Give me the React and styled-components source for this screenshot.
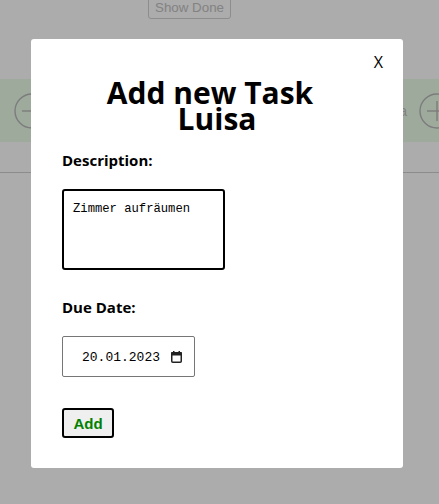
import React from 'react'
import styled, { createGlobalStyle } from 'styled-components'

const GlobalStyle = createGlobalStyle`
	html, body {
		margin: 0;
		padding: 0;
		background: #fff;
		font-family: 'Open Sans', 'Noto Sans', sans-serif;
	}
`

const CircleIcon = ({ plus }) => (
	<svg width='36' height='36' viewBox='0 0 36 36'>
		<circle cx='18' cy='18' r='17' fill='none' stroke='#b8b8b8' strokeWidth='1.4' />
		<line x1='8' y1='18' x2='28' y2='18' stroke='#b8b8b8' strokeWidth='1.4' />
		{plus && <line x1='18' y1='8' x2='18' y2='28' stroke='#b8b8b8' strokeWidth='1.4' />}
	</svg>
)

const CalendarIcon = () => (
	<svg width='11' height='12' viewBox='0 0 11 12'>
		<rect x='0.75' y='1.75' width='9.5' height='9.5' rx='1' fill='none' stroke='#222' strokeWidth='1.5' />
		<rect x='0' y='1' width='11' height='3.5' rx='1' fill='#222' />
		<rect x='2' y='0' width='1.5' height='2' fill='#222' />
		<rect x='7.5' y='0' width='1.5' height='2' fill='#222' />
	</svg>
)

const App = () => {
	return (
		<>
			<GlobalStyle />
			<Page>
				<TopBar>
					<ShowDone>Show Done</ShowDone>
				</TopBar>
				<TaskBand>
					<CircleIcon />
					<Spacer />
					<TaskName>Luisa</TaskName>
					<RightIcon>
						<CircleIcon plus />
					</RightIcon>
				</TaskBand>
				<Divider />
			</Page>
			<Overlay>
				<Modal>
					<CloseRow>
						<CloseButton>X</CloseButton>
					</CloseRow>
					<Title>
						<TitleLine $shift={7}>Add new Task</TitleLine>
						<TitleLine>Luisa</TitleLine>
					</Title>
					<Label $gap={18}>Description:</Label>
					<TextArea defaultValue='Zimmer aufräumen' />
					<Label $gap={27}>Due Date:</Label>
					<DateBox>
						<DateText>20.01.2023</DateText>
						<CalendarIcon />
					</DateBox>
					<AddButton>Add</AddButton>
				</Modal>
			</Overlay>
		</>
	)
}

const Page = styled.div`
	width: 100%;
	height: 504px;
	overflow: hidden;
`

const TopBar = styled.div`
	display: flex;
	margin-top: -4px;
	padding-left: 148px;
	height: 83px;
`

const ShowDone = styled.button`
	width: 83px;
	height: 23px;
	background: #fff;
	border: 1px solid #d2d2d2;
	border-radius: 3px;
	color: #c2c2c2;
	font-family: 'Liberation Sans', Arial, sans-serif;
	font-size: 13.33px;
	padding: 0;
`

const TaskBand = styled.div`
	display: flex;
	align-items: center;
	height: 63px;
	padding-left: 14px;
	background: #eafde8;
`

const Spacer = styled.div`
	flex: 1;
`

const TaskName = styled.span`
	font-family: 'Liberation Sans', Arial, sans-serif;
	font-size: 14px;
	color: #c0c0c0;
	margin-right: 12px;
`

const RightIcon = styled.div`
	display: flex;
	margin-right: -16px;
`

const Divider = styled.div`
	margin-top: 30px;
	height: 1px;
	background: #d0d0d0;
`

const Overlay = styled.div`
	position: fixed;
	inset: 0;
	background: rgba(0, 0, 0, 0.325);
`

const Modal = styled.div`
	box-sizing: border-box;
	width: 372px;
	height: 429px;
	margin: 39px 0 0 31px;
	padding: 12px 20px 0 31px;
	background: #fff;
	border-radius: 3px;
	display: flex;
	flex-direction: column;
	align-items: flex-start;
`

const CloseRow = styled.div`
	display: flex;
	justify-content: flex-end;
	align-self: stretch;
	height: 22px;
`

const CloseButton = styled.button`
	background: none;
	border: none;
	padding: 0;
	font-family: 'Open Sans', sans-serif;
	font-size: 16px;
	line-height: 22px;
	color: #000;
`

const Title = styled.h1`
	align-self: stretch;
	margin: 7px -20px 0 -31px;
	font-size: 30px;
	font-weight: 700;
	line-height: 26px;
	text-align: center;
	color: #000;
`

const TitleLine = styled.span`
	display: block;
	padding-right: ${(p) => (p.$shift ? p.$shift * 2 : 0)}px;
`

const Label = styled.label`
	display: block;
	margin-top: ${(p) => p.$gap}px;
	font-size: 15px;
	font-weight: 700;
	line-height: 20px;
	color: #000;
`

const TextArea = styled.textarea`
	box-sizing: border-box;
	width: 163px;
	height: 81px;
	margin-top: 19px;
	padding: 11px 9px;
	border: 2px solid #000;
	border-radius: 3px;
	font-family: 'Liberation Mono', monospace;
	font-size: 12.2px;
	color: #000;
	resize: none;
	outline: none;
`

const DateBox = styled.div`
	box-sizing: border-box;
	display: flex;
	align-items: center;
	gap: 11px;
	width: 133px;
	height: 41px;
	margin-top: 19px;
	padding: 1px 0 0 19px;
	border: 1px solid #767676;
	border-radius: 2px;
`

const DateText = styled.span`
	font-family: 'Liberation Mono', monospace;
	font-size: 13px;
	color: #000;
`

const AddButton = styled.button`
	box-sizing: border-box;
	width: 52px;
	height: 30px;
	margin-top: 31px;
	padding: 0;
	background: #efefef;
	border: 2px solid #000;
	border-radius: 3px;
	color: #008000;
	font-family: 'Liberation Sans', Arial, sans-serif;
	font-size: 15px;
	font-weight: 700;
`

export default App
